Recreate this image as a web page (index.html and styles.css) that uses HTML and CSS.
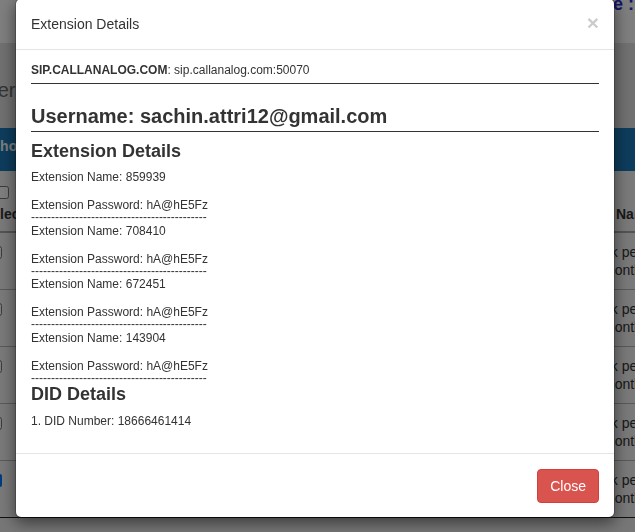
FILE: index.html
```html
<!DOCTYPE html>
<html lang="en">
<head>
<meta charset="utf-8">
<title>Extension Details</title>
<link rel="stylesheet" href="styles.css">
</head>
<body>
<div class="topbar"><span class="topbar-title">Balance :</span></div>
<div class="content">
  <div class="title-row"><h2 class="page-title">Provider</h2></div>
  <table class="plans">
    <colgroup>
      <col class="c-sel">
      <col class="c-mid">
      <col class="c-name">
    </colgroup>
    <thead>
      <tr><th colspan="3" class="band-cell">Choose Plan</th></tr>
      <tr class="head">
        <th><input type="checkbox" class="head-check">Select</th>
        <th>Description</th>
        <th class="name-head">Name</th>
      </tr>
    </thead>
    <tbody>
      <tr><td><input type="checkbox" class="row-check"></td><td>Plan</td><td class="name-cell">4k per<br>month</td></tr>
      <tr><td><input type="checkbox" class="row-check"></td><td>Plan</td><td class="name-cell">4k per<br>month</td></tr>
      <tr><td><input type="checkbox" class="row-check"></td><td>Plan</td><td class="name-cell">4k per<br>month</td></tr>
      <tr><td><input type="checkbox" class="row-check"></td><td>Plan</td><td class="name-cell">4k per<br>month</td></tr>
      <tr><td><input type="checkbox" class="row-check" checked></td><td>Plan</td><td class="name-cell">4k per<br>month</td></tr>
    </tbody>
  </table>
</div>

<div class="backdrop"></div>

<div class="modal">
  <div class="modal-header">
    <h4 class="modal-title">Extension Details</h4>
    <button type="button" class="close">&times;</button>
  </div>
  <div class="modal-body">
    <p class="sip"><b>SIP.CALLANALOG.COM</b>: sip.callanalog.com:50070</p>
    <hr class="rule">
    <h3 class="username">Username: sachin.attri12@gmail.com</h3>
    <hr class="rule">
    <h3 class="section first">Extension Details</h3>
    <div class="ext">
      <p class="ext-line">Extension Name: 859939</p>
      <p class="ext-line pass">Extension Password: hA@hE5Fz</p>
      <div class="dashes">--------------------------------------------</div>
    </div>
    <div class="ext">
      <p class="ext-line">Extension Name: 708410</p>
      <p class="ext-line pass">Extension Password: hA@hE5Fz</p>
      <div class="dashes">--------------------------------------------</div>
    </div>
    <div class="ext">
      <p class="ext-line">Extension Name: 672451</p>
      <p class="ext-line pass">Extension Password: hA@hE5Fz</p>
      <div class="dashes">--------------------------------------------</div>
    </div>
    <div class="ext">
      <p class="ext-line">Extension Name: 143904</p>
      <p class="ext-line pass">Extension Password: hA@hE5Fz</p>
      <div class="dashes">--------------------------------------------</div>
    </div>
    <h3 class="section did">DID Details</h3>
    <p class="ext-line did-line">1. DID Number: 18666461414</p>
  </div>
  <div class="modal-footer">
    <button type="button" class="btn-danger">Close</button>
  </div>
</div>
</body>
</html>
```

FILE: styles.css
```css
html, body {
  margin: 0;
  padding: 0;
  height: 100%;
  overflow: hidden;
}

body {
  font-family: "Liberation Sans", Arial, Helvetica, sans-serif;
  font-size: 14px;
  line-height: 20px;
  color: #333;
  background: #eeeeee;
}

/* ---------- page behind the dialog ---------- */
.topbar {
  height: 43px;
  background: #fff;
  overflow: hidden;
}

.topbar-title {
  display: block;
  margin: -6px 1px 0 0;
  text-align: right;
  font-size: 18px;
  font-weight: bold;
  line-height: 20px;
  color: #2a2ad0;
}

.content {
  margin-left: -25px;
  width: 760px;
}

.title-row {
  height: 85px;
  background: #e2e2e2;
  overflow: hidden;
}

.page-title {
  margin: 0 0 0 -34px;
  padding-top: 36px;
  font-size: 20px;
  line-height: 22px;
  font-weight: normal;
  color: #6a6a6a;
}

.plans {
  width: 760px;
  border-collapse: collapse;
  table-layout: fixed;
  background: #f4f4f4;
}

.c-sel { width: 100px; }
.c-name { width: 140px; }

.band-cell {
  background: #1c7bba;
  color: #fff;
  font-weight: bold;
  text-align: left;
  padding: 8px 15px 15px;
  line-height: 20px;
}

.head th {
  padding: 13px 8px 7px;
  text-align: left;
  vertical-align: bottom;
  font-weight: bold;
  border-bottom: 2px solid #a8a8a8;
  line-height: 20px;
  white-space: nowrap;
  overflow: hidden;
}

.head th.name-head {
  padding-left: 21px;
}

.head-check {
  display: block;
  width: 13px;
  height: 13px;
  margin: 2px 0 5px 13px;
}

.plans td {
  padding: 10px 8px;
  line-height: 18px;
  vertical-align: top;
  border-bottom: 1px solid #b4b4b4;
  white-space: nowrap;
  overflow: hidden;
}

.plans tbody tr:last-child td {
  border-bottom-color: #222;
}

.row-check {
  display: block;
  width: 13px;
  height: 13px;
  margin: 3px 0 0 6px;
}

/* ---------- dialog ---------- */
.backdrop {
  position: fixed;
  inset: 0;
  background: rgba(0, 0, 0, 0.5);
}

.modal {
  position: absolute;
  top: -2px;
  left: 15px;
  width: 600px;
  box-sizing: border-box;
  background: #fff;
  background-clip: padding-box;
  border: 1px solid rgba(0, 0, 0, 0.2);
  border-radius: 6px;
  box-shadow: 0 5px 15px rgba(0, 0, 0, 0.5);
}

.modal-header {
  display: flex;
  justify-content: space-between;
  align-items: flex-start;
  padding: 15px;
  border-bottom: 1px solid #e5e5e5;
}

.modal-title {
  margin: 0;
  font-size: 14px;
  line-height: 20px;
  font-weight: normal;
}

.close {
  margin-top: -2px;
  padding: 0;
  border: 0;
  background: none;
  font-family: inherit;
  font-size: 21px;
  font-weight: bold;
  line-height: 1;
  color: #000;
  opacity: 0.2;
  text-shadow: 0 1px 0 #fff;
}

.modal-body {
  padding: 12px 15px 23px;
}

.sip {
  margin: 0;
  font-size: 12px;
  line-height: 17px;
}

.rule {
  margin: 4px 0 0;
  height: 0;
  border: 0;
  border-top: 1px solid #333;
}

.username {
  margin: 21px 0 0;
  font-size: 20px;
  line-height: 22px;
  font-weight: bold;
}

.section {
  margin: 9px 0 0;
  font-size: 18px;
  line-height: 20px;
  font-weight: bold;
}

.section.did {
  margin-top: 3px;
}

.ext {
  margin-top: 2.5px;
}

.section.first + .ext {
  margin-top: 8px;
}

.ext-line {
  margin: 0;
  font-size: 12px;
  line-height: 17px;
}

.ext-line.pass {
  margin-top: 11px;
}

.dashes {
  font-size: 12px;
  line-height: 6px;
  height: 6px;
}

.did-line {
  margin-top: 9px;
}

.modal-footer {
  padding: 15px 15px 14px;
  text-align: right;
  border-top: 1px solid #e5e5e5;
}

.btn-danger {
  display: inline-block;
  padding: 6px 12px;
  font-family: inherit;
  font-size: 14px;
  line-height: 20px;
  color: #fff;
  background: #d9534f;
  border: 1px solid #d43f3a;
  border-radius: 4px;
}
```
